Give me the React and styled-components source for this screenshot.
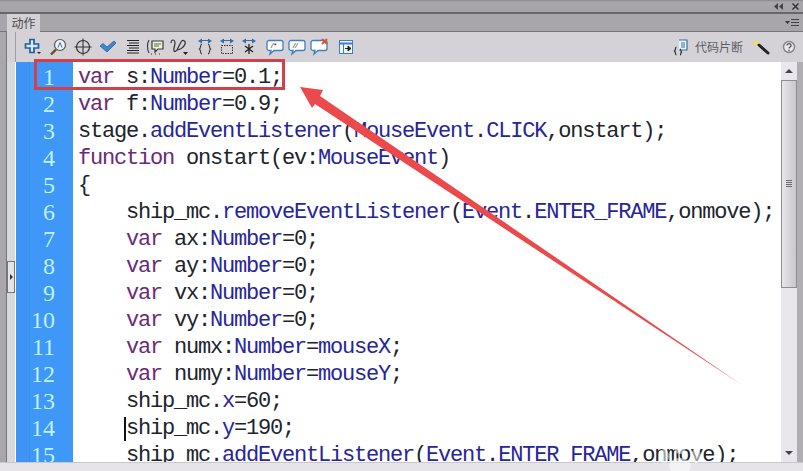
import React from 'react';
import styled, { createGlobalStyle } from 'styled-components';

const GlobalStyle = createGlobalStyle`
  html, body { margin: 0; padding: 0; background: #a9a7ab; }
`;

const Panel = styled.div`
  position: relative;
  width: 803px;
  height: 471px;
  overflow: hidden;
  display: flex;
  flex-direction: column;
  background: #d3d1d6;
  font-family: "Noto Sans CJK SC", "Liberation Sans", sans-serif;
`;

const TitleBar = styled.div`
  height: 12px;
  flex: none;
  display: flex;
  justify-content: flex-end;
  align-items: center;
  gap: 9px;
  padding-right: 4px;
  background: linear-gradient(#8a888c 0, #a9a7ab 2px, #a5a3a7 100%);
  border-bottom: 2px solid #68666a;
`;

const TabRow = styled.div`
  height: 17px;
  flex: none;
  display: flex;
  align-items: flex-end;
  justify-content: space-between;
  padding: 0 4px 0 7px;
  background: #a8a6aa;
  border-bottom: 1px solid #77757a;
`;

const Tab = styled.div`
  width: 33px;
  height: 18px;
  margin-bottom: -1px;
  background: #d3d1d6;
  color: #4a4a4e;
  font-size: 12px;
  line-height: 18px;
  text-align: center;
`;

const MenuIcon = styled.div`
  align-self: center;
  line-height: 0;
`;

const Toolbar = styled.div`
  height: 30px;
  flex: none;
  display: flex;
  align-items: center;
  padding: 0 7px 0 24px;
  background: linear-gradient(90deg, #a9a7ab 0, #a9a7ab 6px, #77757a 6px, #77757a 7px, #d4d2d7 7px, #d4d2d7 15px, #a09ea3 15px, #a09ea3 16px, #d4d2d7 16px);
`;

const ToolGroup = styled.div`
  display: flex;
  align-items: center;
  gap: ${(p) => p.$gap}px;
  margin-right: ${(p) => p.$after}px;
`;

const Spacer = styled.div`
  flex: 1;
`;

const SnippetLabel = styled.span`
  margin: 0 9px 0 6px;
  color: #5d5d62;
  font-size: 12px;
  line-height: 16px;
  white-space: nowrap;
`;

const HelpSlot = styled.div`
  margin-left: 12px;
  line-height: 0;
`;

const Body = styled.div`
  flex: 1;
  min-height: 0;
  display: flex;
  background: #fff;
`;

const Rail = styled.div`
  width: 15px;
  flex: none;
  display: flex;
  align-items: center;
  padding-top: 30px;
  box-sizing: border-box;
  background: linear-gradient(90deg, #a9a7ab 0, #a9a7ab 6px, #77757a 6px, #77757a 7px, #d9d8dc 7px);
`;

const RailHandle = styled.div`
  width: 6px;
  height: 30px;
  margin-left: 7px;
  border: 1px solid #77757a;
  background: #e4e3e7;
  display: flex;
  align-items: center;
  justify-content: center;
  &::after {
    content: '';
    border-left: 3px solid #333;
    border-top: 3px solid transparent;
    border-bottom: 3px solid transparent;
  }
`;

const Editor = styled.div`
  flex: 1;
  min-width: 0;
  display: flex;
  overflow: hidden;
  background: #fff;
  margin-left: 1px;
`;

const Gutter = styled.div`
  width: 57px;
  flex: none;
  padding-top: 2px;
  background: linear-gradient(90deg, #3d94f5 0, #3d94f5 13px, #3a8de9 13px, #3a8de9 14px, #3f97f8 14px);
`;

const LineNumber = styled.div`
  height: 27px;
  padding-right: 18px;
  text-align: right;
  color: #bdf2f8;
  font: 24px/27px "Liberation Serif", serif;
`;

const Code = styled.div`
  flex: 1;
  min-width: 0;
  padding: 2px 0 0 5px;
`;

const CodeLine = styled.div`
  position: relative;
  height: 27px;
  padding-left: ${(p) => (p.$indent ? 48 : 0)}px;
  white-space: pre;
  color: #20242a;
  font: 22px/27px "Liberation Mono", monospace;
  letter-spacing: -1.2px;
`;

const Keyword = styled.span`
  color: #6b2a78;
`;

const Builtin = styled.span`
  color: #26269a;
`;

const Caret = styled.span`
  position: absolute;
  left: 46px;
  top: 2px;
  width: 2px;
  height: 24px;
  background: #111;
`;

const Scrollbar = styled.div`
  width: 22px;
  flex: none;
  display: flex;
  flex-direction: column;
  align-items: flex-start;
  box-sizing: border-box;
  background: linear-gradient(90deg, #e9e7ed 0, #e9e7ed 16px, #b0aeb3 16px);
`;

const ScrollArrow = styled.div`
  width: 16px;
  height: 18px;
  display: flex;
  align-items: center;
  justify-content: center;
  flex: none;
  &::after {
    content: '';
    border-left: 4px solid transparent;
    border-right: 4px solid transparent;
    ${(p) => (p.$down ? 'border-top' : 'border-bottom')}: 4px solid #444;
  }
`;

const ScrollGap = styled.div`
  flex: 1;
`;

const ScrollThumb = styled.div`
  width: 14px;
  height: 206px;
  flex: none;
  border: 1px solid #8f8d92;
  background: linear-gradient(90deg, #e7e6ea, #c8c6cc);
  display: flex;
  align-items: center;
  justify-content: center;
`;

const Grip = styled.div`
  width: 6px;
  height: 8px;
  background: repeating-linear-gradient(#6d6b70 0, #6d6b70 1px, transparent 1px, transparent 2px);
`;

const StatusStrip = styled.div`
  height: 9px;
  flex: none;
  background: #e6e4e9;
  border-top: 1px solid #c9c7cc;
  box-sizing: border-box;
`;

const Callout = styled.div`
  position: absolute;
  left: 34px;
  top: 59px;
  width: 245px;
  height: 25px;
  border: 3px solid #d24049;
`;

const ArrowLayer = styled.svg`
  position: absolute;
  left: 0;
  top: 0;
  pointer-events: none;
`;

const Ico = ({ w = 18, h = 18, children }) => (
  <svg width={w} height={h} viewBox={`0 0 ${w} ${h}`} fill="none">
    {children}
  </svg>
);

const Dot = ({ x = 15, y = 15 }) => <path d={`M${x - 2} ${y}h4l-2 2z`} fill="#222" />;

const Bubble = ({ children, stroke = '#3d7fc4' }) => (
  <Ico>
    <path d="M3 2.500h12a2 2 0 0 1 2 2v6a2 2 0 0 1-2 2H8l-4 3.500 1-3.500H3a2 2 0 0 1-2-2v-6a2 2 0 0 1 2-2z" fill="#fff" stroke={stroke} strokeWidth="1.300" />
    {children}
  </Ico>
);

const Arrows = ({ color = '#2f6ea8' }) => (
  <g fill={color}>
    <path d="M1 3l4-2.500v5z" />
    <path d="M15 3l-4-2.500v5z" />
    <path d="M4 2.500h8" stroke={color} />
  </g>
);

const AddIcon = () => (
  <Ico>
    <path d="M6 1.500h4v4.500h4.500v4H10v4.500H6V10H1.500V6H6z" fill="#d9e8f7" stroke="#1f5f9e" strokeWidth="1.700" />
    <Dot x={15} y={14} />
  </Ico>
);
const FindIcon = () => (
  <Ico>
    <circle cx="11" cy="7" r="5.500" fill="#eef2f6" stroke="#555" strokeWidth="1.200" />
    <path d="M7 11.500L2 16.500" stroke="#6b4a2a" strokeWidth="2.400" />
    <path d="M9 9.500l2-5 2 5" stroke="#3c6fa8" strokeWidth="1" />
  </Ico>
);
const TargetIcon = () => (
  <Ico>
    <circle cx="9" cy="9" r="6.500" stroke="#333" strokeWidth="1.200" />
    <path d="M9 .5v17M.5 9h17" stroke="#333" strokeWidth="1.100" />
  </Ico>
);
const CheckIcon = () => (
  <Ico>
    <path d="M1 8l3-2.500 4 3.500L15 3l2 2-9 9z" fill="#3f86d2" stroke="#2a5f9e" strokeWidth=".8" />
  </Ico>
);
const LinesIcon = () => (
  <Ico>
    <path d="M3 2.500h12M5 5h10M3 7.500h12M5 10h10M3 12.500h12M3 15h12" stroke="#222" strokeWidth="1.200" />
  </Ico>
);
const NoteIcon = () => (
  <Ico w={20}>
    <path d="M3 2C1 5 1 12 3 15" stroke="#333" strokeWidth="1.100" />
    <path d="M6 3h11v8h-5l-3 3v-3H6z" fill="#f3efdc" stroke="#3b3b3b" strokeWidth="1.200" />
    <path d="M8 6h7M8 8h5" stroke="#3f7a3f" strokeWidth="1" />
    <path d="M5 16h1M9 16h1M13 16h1" stroke="#333" />
  </Ico>
);
const ScriptIcon = () => (
  <Ico w={20}>
    <path d="M2 5c0-4 4-4 4 0 0 3-2 6-1 8 1 1 3 0 4-3l3-6c2-3 5-1 4 2-1 3-5 6-8 6" stroke="#333" strokeWidth="1.200" />
    <path d="M14 14h5l-2.500 3z" fill="#222" />
  </Ico>
);
const BraceIcon = () => (
  <Ico w={16}>
    <Arrows />
    <path d="M5 6C3 6 4 10 2.500 11 4 12 3 16 5 16M11 6c2 0 1 4 2.500 5C12 12 13 16 11 16" stroke="#333" strokeWidth="1.100" />
  </Ico>
);
const BoxIcon = () => (
  <Ico w={16}>
    <Arrows />
    <rect x="2.500" y="7.500" width="11" height="8" stroke="#333" strokeDasharray="1.500 1" />
  </Ico>
);
const StarIcon = () => (
  <Ico w={16}>
    <Arrows />
    <path d="M8 6v10M4 8l8 6M12 8l-8 6" stroke="#222" strokeWidth="1.300" />
  </Ico>
);
const PanelIcon = () => (
  <Ico>
    <rect x="2.500" y="2.500" width="13" height="13" fill="#f4f5f7" stroke="#3d7fc4" />
    <path d="M2.500 5.500h13" stroke="#3d7fc4" strokeWidth="2" />
    <path d="M6.500 5.500v10" stroke="#3d7fc4" />
    <path d="M8 10.500h4M11 8l3 2.500-3 2.500z" stroke="#222" fill="#222" />
  </Ico>
);
const SnippetIcon = () => (
  <Ico w={16}>
    <path d="M6 2h8v10H6" fill="#e8f3f8" stroke="#3d6f9c" strokeWidth="1.200" />
    <path d="M8 5h4M8 7h4M8 9h4" stroke="#3d6f9c" />
    <path d="M3.500 9C2 9 3 12 1.500 13 3 14 2 17 3.500 17M7 11c1 0 .5 2 1.500 3-1 1-.5 3-1.500 3" stroke="#222" strokeWidth="1.100" />
  </Ico>
);
const WandIcon = () => (
  <Ico>
    <path d="M7 7l9 8" stroke="#222" strokeWidth="3" strokeLinecap="round" />
    <path d="M4 1l1 3 3 1-3 1-1 3-1-3-3-1 3-1z" fill="#f2e34a" />
  </Ico>
);
const HelpIcon = () => (
  <Ico w={14} h={14}>
    <circle cx="7" cy="7" r="5.500" fill="#e9e8ec" stroke="#8a888c" strokeWidth="1.500" />
    <path d="M5 5.500c0-2.500 4.500-2.500 4 .3C8.800 7 7 7 7 8.500M7 9.800v1.500" stroke="#555" strokeWidth="1.300" />
  </Ico>
);

const Var = () => <Keyword>var</Keyword>;
const Num = () => <Builtin>Number</Builtin>;

const lines = [
  <CodeLine key="1"><Var /> s:<Num />=0.1;</CodeLine>,
  <CodeLine key="2"><Var /> f:<Num />=0.9;</CodeLine>,
  <CodeLine key="3">stage.<Builtin>addEventListener</Builtin>(<Builtin>MouseEvent</Builtin>.<Builtin>CLICK</Builtin>,onstart);</CodeLine>,
  <CodeLine key="4"><Keyword>function</Keyword> onstart(ev:<Builtin>MouseEvent</Builtin>)</CodeLine>,
  <CodeLine key="5">{'{'}</CodeLine>,
  <CodeLine key="6" $indent>ship_mc.<Builtin>removeEventListener</Builtin>(<Builtin>Event</Builtin>.<Builtin>ENTER_FRAME</Builtin>,onmove);</CodeLine>,
  <CodeLine key="7" $indent><Var /> ax:<Num />=0;</CodeLine>,
  <CodeLine key="8" $indent><Var /> ay:<Num />=0;</CodeLine>,
  <CodeLine key="9" $indent><Var /> vx:<Num />=0;</CodeLine>,
  <CodeLine key="10" $indent><Var /> vy:<Num />=0;</CodeLine>,
  <CodeLine key="11" $indent><Var /> numx:<Num />=<Builtin>mouseX</Builtin>;</CodeLine>,
  <CodeLine key="12" $indent><Var /> numy:<Num />=<Builtin>mouseY</Builtin>;</CodeLine>,
  <CodeLine key="13" $indent>ship_mc.<Builtin>x</Builtin>=60;</CodeLine>,
  <CodeLine key="14" $indent><Caret />ship_mc.<Builtin>y</Builtin>=190;</CodeLine>,
  <CodeLine key="15" $indent>ship_mc.<Builtin>addEventListener</Builtin>(<Builtin>Event</Builtin>.<Builtin>ENTER_FRAME</Builtin>,onmove);</CodeLine>,
];

export default function App() {
  return (
    <>
      <GlobalStyle />
      <Panel>
        <TitleBar>
          <svg width="9" height="7" viewBox="0 0 9 7"><path d="M4 0v7L0 3.500zM9 0v7L5 3.500z" fill="#444" /></svg>
          <svg width="7" height="7" viewBox="0 0 7 7"><path d="M.5.5l6 6M6.500.5l-6 6" stroke="#333" strokeWidth="1.500" /></svg>
        </TitleBar>
        <TabRow>
          <Tab>动作</Tab>
          <MenuIcon>
            <svg width="14" height="8" viewBox="0 0 14 8"><path d="M0 2h5L2.500 5z" fill="#333" /><path d="M6 .5h8M6 3.500h8M6 6.500h8" stroke="#444" /></svg>
          </MenuIcon>
        </TabRow>
        <Toolbar>
          <ToolGroup $gap={7} $after={4}>
            <AddIcon /><FindIcon /><TargetIcon /><CheckIcon /><LinesIcon />
          </ToolGroup>
          <ToolGroup $gap={3} $after={8}>
            <NoteIcon /><ScriptIcon />
          </ToolGroup>
          <ToolGroup $gap={6} $after={9}>
            <BraceIcon /><BoxIcon /><StarIcon />
          </ToolGroup>
          <ToolGroup $gap={4} $after={9}>
            <Bubble><text x="5" y="10" fontSize="8" fontStyle="italic" fill="#333" fontFamily="Liberation Sans">/*</text></Bubble>
            <Bubble><text x="5" y="10" fontSize="8" fontStyle="italic" fill="#333" fontFamily="Liberation Sans">//</text></Bubble>
            <Bubble><path d="M12 1l5 5M17 1l-5 5" stroke="#d9532c" strokeWidth="1.800" /></Bubble>
          </ToolGroup>
          <PanelIcon />
          <Spacer />
          <SnippetIcon />
          <SnippetLabel>代码片断</SnippetLabel>
          <WandIcon />
          <HelpSlot><HelpIcon /></HelpSlot>
        </Toolbar>
        <Body>
          <Rail><RailHandle /></Rail>
          <Editor>
            <Gutter>
              {lines.map((_, i) => <LineNumber key={i}>{i + 1}</LineNumber>)}
            </Gutter>
            <Code>{lines}</Code>
          </Editor>
          <Scrollbar>
            <ScrollArrow />
            <ScrollThumb><Grip /></ScrollThumb>
            <ScrollGap />
            <ScrollArrow $down />
          </Scrollbar>
        </Body>
        <StatusStrip />
        <Callout />
        <ArrowLayer width="803" height="471" viewBox="0 0 803 471">
          <path d="M300 87L323 90 320 96 742 385 315 104 312 108z" fill="#ea4a4c" />
          <g fill="#fff" opacity=".55">
            <ellipse cx="680" cy="446" rx="6" ry="8" />
            <ellipse cx="664" cy="456" rx="5" ry="7" />
            <ellipse cx="696" cy="456" rx="5" ry="7" />
            <ellipse cx="680" cy="466" rx="11" ry="8" />
          </g>
        </ArrowLayer>
      </Panel>
    </>
  );
}
